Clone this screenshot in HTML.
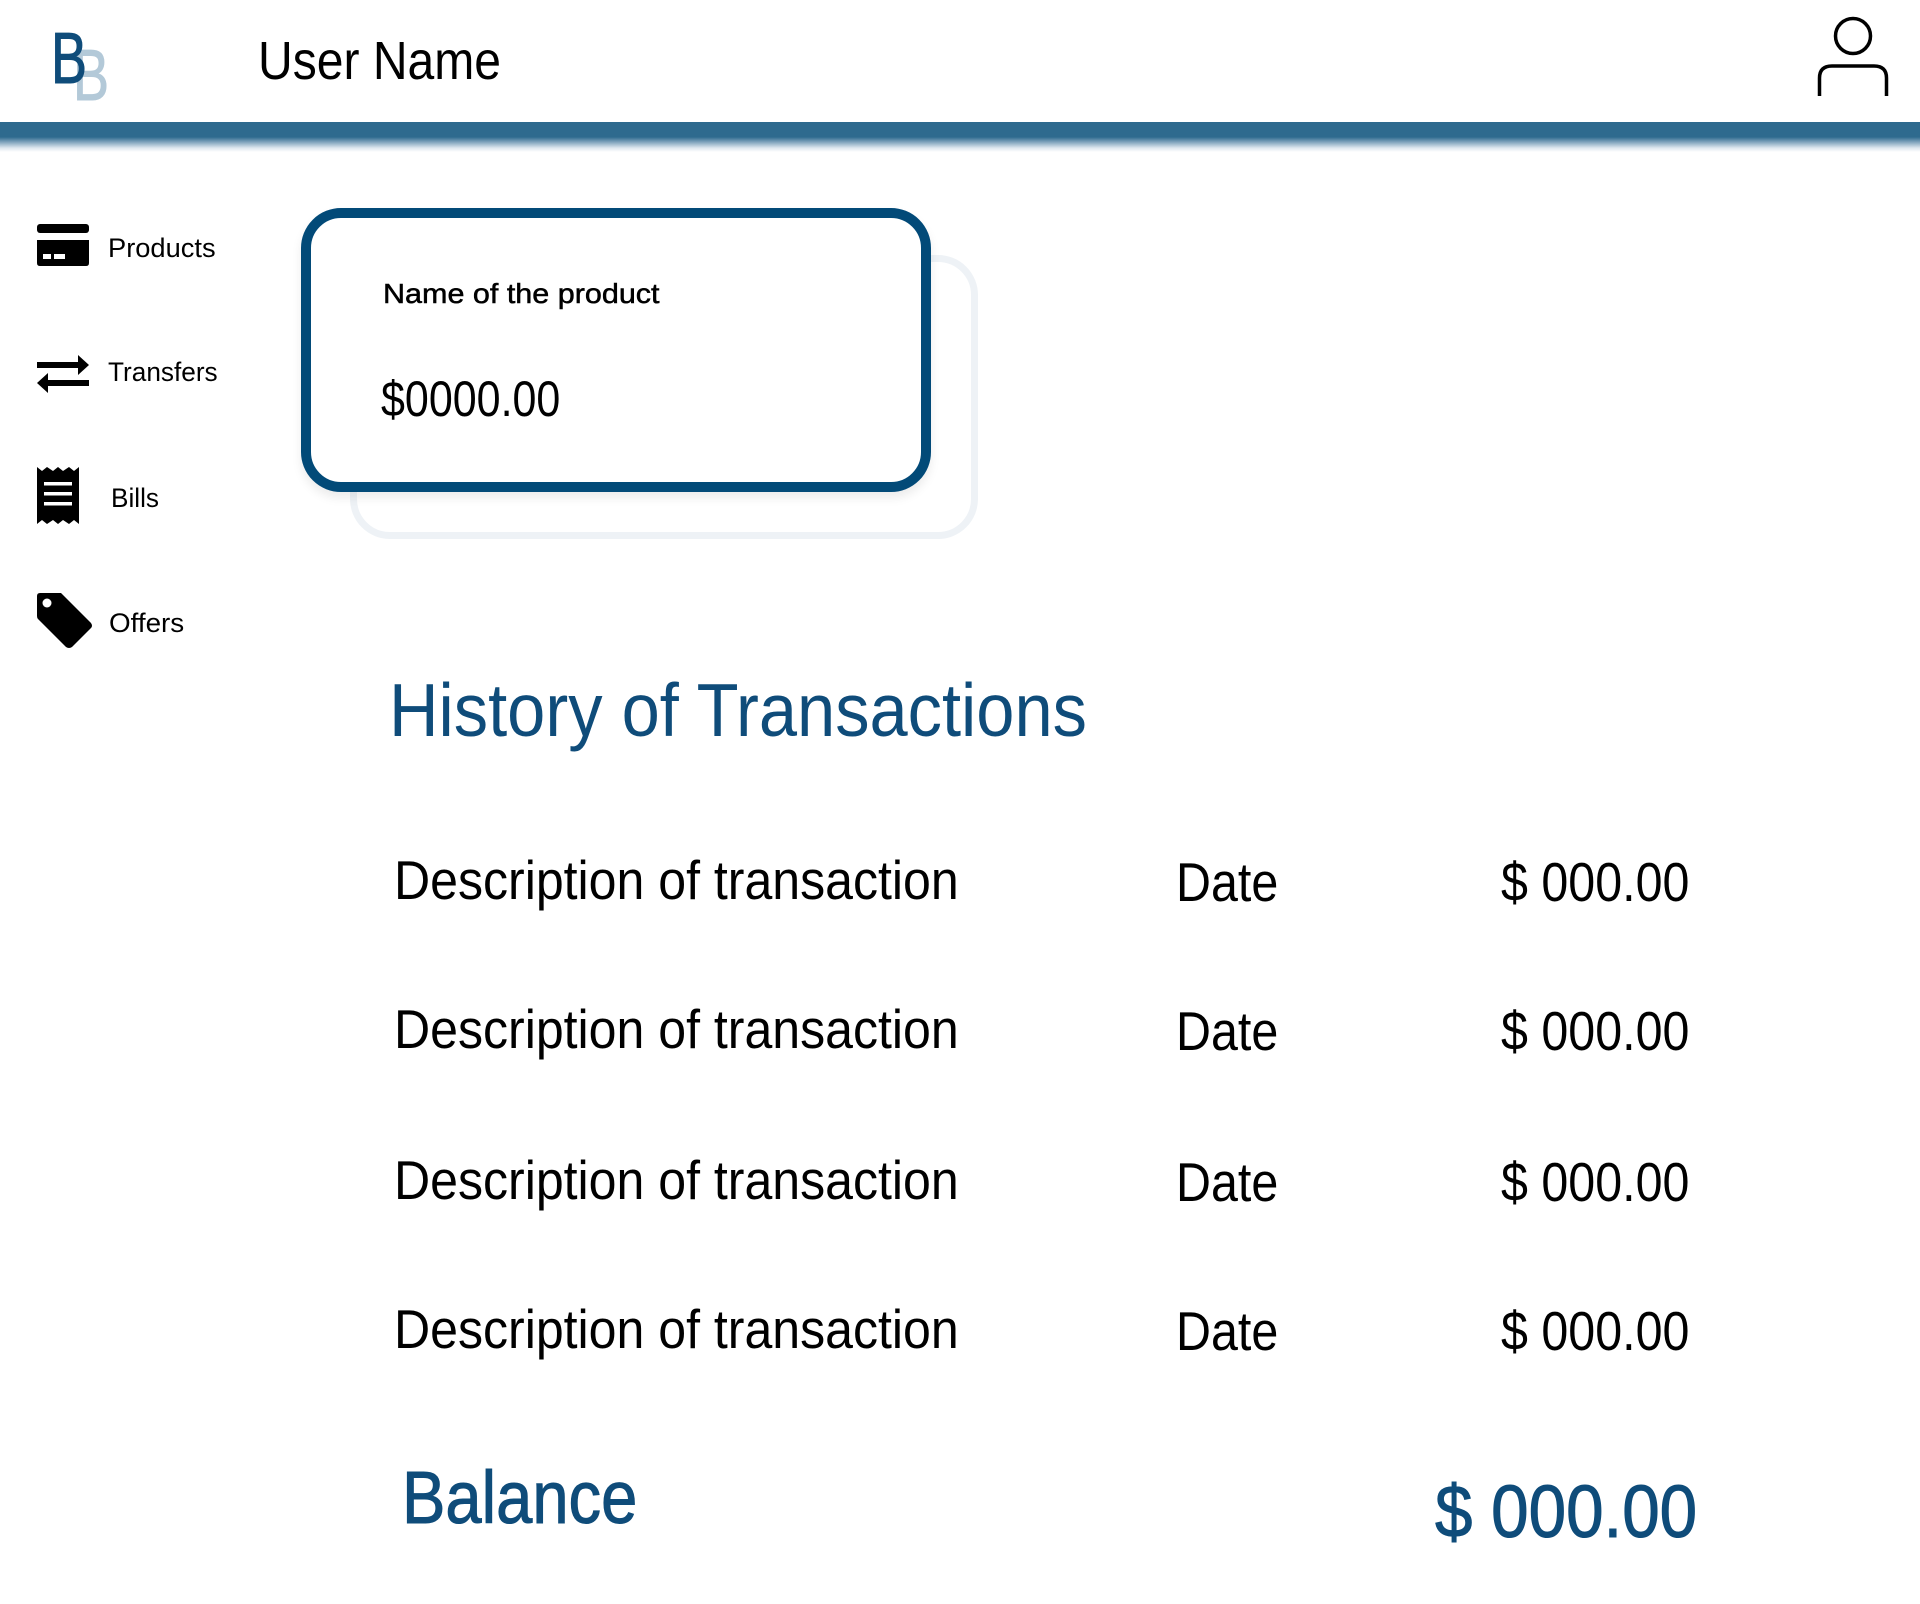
<!DOCTYPE html>
<html><head><meta charset="utf-8"><style>
html,body{margin:0;padding:0;background:#fff;}
body{width:1920px;height:1604px;position:relative;overflow:hidden;font-family:"Liberation Sans",sans-serif;color:#000;}
.t{position:absolute;line-height:1;white-space:nowrap;display:inline-block;transform-origin:0 0;}
.bar{position:absolute;left:0;top:122px;width:1920px;height:30px;background:linear-gradient(#2e6a8e 0,#2e6a8e 15px,#7fa3bb 20px,#dfe8ef 26px,#fff 30px);}
.blue{color:#0f4c7a;}
svg{position:absolute;}
</style></head><body>
<div class="t" style="font-size:72px;color:#b3c9d8;transform:scaleX(.75);left:73px;top:40px;-webkit-text-stroke:1px #b3c9d8">B</div>
<div class="t" style="left:51px;top:23px;font-size:72px;color:#0f4c7a;transform:scaleX(.75);-webkit-text-stroke:1px #0f4c7a">B</div>
<div class="t" style="left:258px;top:34px;font-size:54px;transform:scaleX(.89)">User Name</div>
<svg style="left:1810px;top:12px" width="86" height="90" viewBox="0 0 86 90">
<circle cx="43" cy="24" r="17.5" fill="none" stroke="#000" stroke-width="3.5"/>
<path d="M9.5 84 V66 Q9.5 54 22 54 H64 Q76.5 54 76.5 66 V84" fill="none" stroke="#000" stroke-width="3.5"/>
</svg>
<div class="bar"></div>

<svg style="left:37px;top:224px" width="52" height="42" viewBox="0 0 52 42">
<rect x="0" y="0" width="52" height="9" rx="3" fill="#000"/>
<path d="M0 16 H52 V39 Q52 42 49 42 H3 Q0 42 0 39Z" fill="#000"/>
<rect x="6" y="30" width="8" height="5" fill="#fff"/><rect x="17" y="30" width="11" height="5" fill="#fff"/>
</svg>
<div class="t" style="left:108px;top:235px;font-size:27px;transform:scaleX(1.01)">Products</div>
<svg style="left:37px;top:353px" width="52" height="42" viewBox="0 0 52 42">
<path d="M0 9 H41 V2 L52 12 L41 22 V15 H0Z" fill="#000"/>
<path d="M52 27 H11 V20 L0 30 L11 40 V33 H52Z" fill="#000"/>
</svg>
<div class="t" style="left:108px;top:359px;font-size:27px;transform:scaleX(.97)">Transfers</div>
<svg style="left:37px;top:467px" width="42" height="57" viewBox="0 0 42 57">
<path d="M0 0 L5 4 L10 0 L16 4 L21 0 L26 4 L32 0 L37 4 L42 0 V57 L37 53 L32 57 L26 53 L21 57 L16 53 L10 57 L5 53 L0 57Z" fill="#000"/>
<rect x="7" y="15" width="28" height="3.5" fill="#fff"/><rect x="7" y="25" width="28" height="3.5" fill="#fff"/><rect x="7" y="35" width="28" height="3.5" fill="#fff"/>
</svg>
<div class="t" style="left:111px;top:485px;font-size:27px;transform:scaleX(.97)">Bills</div>
<svg style="left:37px;top:593px" width="56" height="56" viewBox="0 0 56 56">
<path d="M3 0 H24 L54 30 Q56 33 54 35 L35 54 Q32 56 29 54 L1 26 Q0 25 0 23 V3 Q0 0 3 0Z" fill="#000"/>
<circle cx="10" cy="10" r="4.5" fill="#fff"/>
</svg>
<div class="t" style="left:109px;top:610px;font-size:27px;transform:scaleX(1.03)">Offers</div>

<div style="position:absolute;left:350px;top:255px;width:628px;height:284px;box-sizing:border-box;border:7px solid #eef2f6;border-radius:40px;"></div>
<div style="position:absolute;left:301px;top:208px;width:630px;height:284px;box-sizing:border-box;border:10px solid #024a78;border-radius:40px;background:#fff;box-shadow:0 6px 10px rgba(0,0,0,.08);"></div>
<div class="t" style="left:383px;top:280px;font-size:28px;transform:scaleX(1.09);-webkit-text-stroke:.5px #000">Name of the product</div>
<div class="t" style="left:381px;top:374px;font-size:50px;transform:scaleX(.86)">$0000.00</div>

<div class="t blue" style="left:389px;top:673px;font-size:75px;transform:scaleX(.915)">History of Transactions</div>

<div class="t" style="left:394px;top:853px;font-size:55px;transform:scaleX(.91)">Description of transaction</div>
<div class="t" style="left:1176px;top:855px;font-size:55px;transform:scaleX(.88)">Date</div>
<div class="t" style="left:1501px;top:855px;font-size:55px;transform:scaleX(.88)">$ 000.00</div>
<div class="t" style="left:394px;top:1002px;font-size:55px;transform:scaleX(.91)">Description of transaction</div>
<div class="t" style="left:1176px;top:1004px;font-size:55px;transform:scaleX(.88)">Date</div>
<div class="t" style="left:1501px;top:1004px;font-size:55px;transform:scaleX(.88)">$ 000.00</div>
<div class="t" style="left:394px;top:1153px;font-size:55px;transform:scaleX(.91)">Description of transaction</div>
<div class="t" style="left:1176px;top:1155px;font-size:55px;transform:scaleX(.88)">Date</div>
<div class="t" style="left:1501px;top:1155px;font-size:55px;transform:scaleX(.88)">$ 000.00</div>
<div class="t" style="left:394px;top:1302px;font-size:55px;transform:scaleX(.91)">Description of transaction</div>
<div class="t" style="left:1176px;top:1304px;font-size:55px;transform:scaleX(.88)">Date</div>
<div class="t" style="left:1501px;top:1304px;font-size:55px;transform:scaleX(.88)">$ 000.00</div>

<div class="t blue" style="left:402px;top:1461px;font-size:74px;transform:scaleX(.88);-webkit-text-stroke:1px #0f4c7a">Balance</div>
<div class="t blue" style="left:1435px;top:1475px;font-size:74px;transform:scaleX(.91);-webkit-text-stroke:1px #0f4c7a">$ 000.00</div>
</body></html>
